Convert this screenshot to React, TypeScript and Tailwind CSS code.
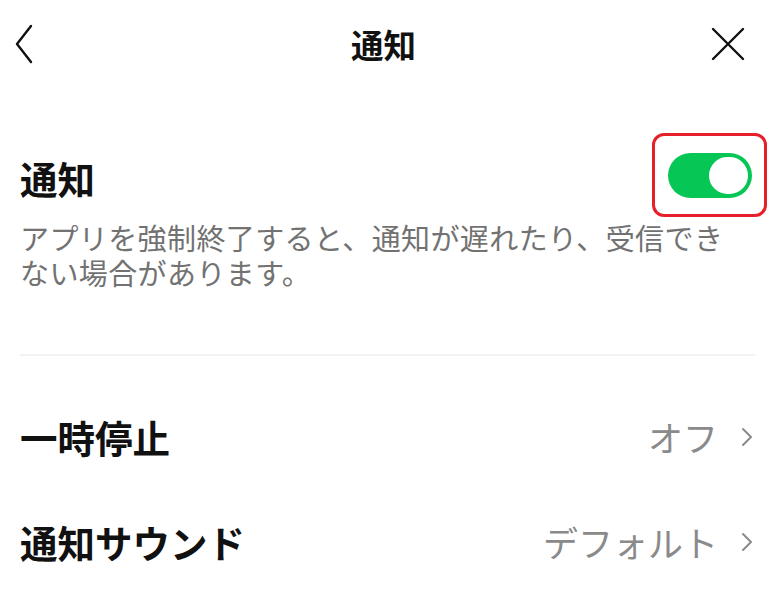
import React from "react";

const font = { fontFamily: '"Noto Sans CJK JP", "Noto Sans", sans-serif' };

function Chevron({ className }: { className?: string }) {
  return (
    <svg width="12" height="20" viewBox="0 0 12 20" fill="none" className={className}>
      <path d="M2 2l8 8-8 8" stroke="currentColor" strokeWidth="2" strokeLinecap="round" strokeLinejoin="round" />
    </svg>
  );
}

function Row({ label, value }: { label: string; value: string }) {
  return (
    <div className="flex items-center justify-between h-[105px]">
      <span className="text-[37.5px] font-bold text-[#111] leading-none">{label}</span>
      <span className="flex items-center gap-[23px] text-[35px] text-[#8a8a8a] leading-none">
        {value}
        <Chevron className="text-[#8a8a8a] mr-[2px]" />
      </span>
    </div>
  );
}

export default function App() {
  return (
    <div className="w-[775px] h-[606px] bg-white overflow-hidden" style={font}>
      <header className="flex items-center justify-between h-[88px] px-[14px]">
        <svg width="20" height="40" viewBox="0 0 20 40" fill="none" className="text-[#111]">
          <path d="M17 2L3 20l14 18" stroke="currentColor" strokeWidth="2.4" strokeLinecap="round" strokeLinejoin="round" />
        </svg>
        <h1 className="text-[32.5px] font-bold text-[#111] leading-none ml-[22px]">通知</h1>
        <svg width="34" height="34" viewBox="0 0 34 34" fill="none" className="text-[#111] mr-[16px]">
          <path d="M2 2l30 30M32 2L2 32" stroke="currentColor" strokeWidth="2.4" strokeLinecap="round" />
        </svg>
      </header>

      <section className="px-[20px] pt-[65px]">
        <div className="flex items-center justify-between h-[45px]">
          <span className="text-[37.5px] font-bold text-[#111] leading-none mt-[4px]">通知</span>
          <div className="relative mr-[3px]">
            <div className="w-[84px] h-[45px] rounded-full bg-[#06c755] flex items-center justify-end pr-[2px]">
              <div className="w-[43px] h-[41px] rounded-full bg-white border-2 border-[#06c755]" />
            </div>
            <div className="absolute -left-[16px] -top-[20px] w-[115px] h-[84px] rounded-[12px] border-[3.5px] border-[#e5202a]" />
          </div>
        </div>
        <p className="mt-[22px] pr-[20px] text-[29px] leading-[35px] text-[#727272] tracking-[0.4px]">
          アプリを強制終了すると、通知が遅れたり、受信できない場合があります。
        </p>
        <div className="mt-[64px] h-[2px] bg-[#f2f2f2]" />
        <div className="pt-[28px]">
          <Row label="一時停止" value="オフ" />
          <Row label="通知サウンド" value="デフォルト" />
        </div>
      </section>
    </div>
  );
}
